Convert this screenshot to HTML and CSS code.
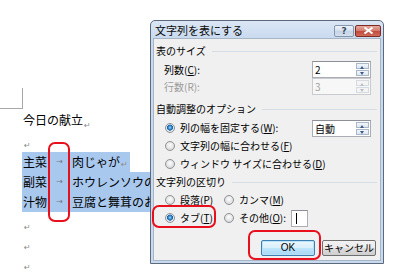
FILE: index.html
```html
<!DOCTYPE html>
<html lang="ja">
<head>
<meta charset="utf-8">
<link rel="stylesheet" href="styles.css">
</head>
<body>
<div class="page">
  <div class="doc">
    <div class="mark"></div>
    <div class="line first">今日の献立<span class="pil">↵</span></div>
    <div class="line blank"><span class="pil">↵</span></div>
    <div class="row"><span class="sel"><span class="cell">主菜</span><span class="tab">→</span>肉じゃが<span class="pil">↵</span></span></div>
    <div class="row"><span class="sel long"><span class="cell">副菜</span><span class="tab">→</span>ホウレンソウの</span></div>
    <div class="row"><span class="sel long"><span class="cell">汁物</span><span class="tab">→</span>豆腐と舞茸のお</span></div>
    <div class="line"><span class="pil">↵</span></div>
    <div class="line"><span class="pil">↵</span></div>
    <div class="line"><span class="pil">↵</span></div>
  </div>

  <div class="dialog">
    <div class="titlebar">
      <span class="title">文字列を表にする</span>
      <span class="caps">
        <span class="capbtn help">?</span>
        <span class="capbtn close">
          <svg width="11" height="7" viewBox="0 0 11 7"><path d="M1.5 0.5 L9.5 6.5 M9.5 0.5 L1.5 6.5" stroke="#fff" stroke-width="2" fill="none"/></svg>
        </span>
      </span>
    </div>
    <div class="dbody">
      <div class="group g1"><span>表のサイズ</span><span class="rule"></span></div>
      <div class="field"><span class="flabel">列数(<u>C</u>):</span>
        <span class="spin"><span class="val">2</span><span class="spinbtns"><span class="up"></span><span class="down"></span></span></span>
      </div>
      <div class="field disabled"><span class="flabel">行数(R):</span>
        <span class="spin dis"><span class="val">3</span><span class="spinbtns"><span class="up"></span><span class="down"></span></span></span>
      </div>
      <div class="group g2"><span>自動調整のオプション</span><span class="rule"></span></div>
      <div class="opt"><span class="radio on"></span><span class="otext">列の幅を固定する(<u>W</u>):</span>
        <span class="spin auto"><span class="val">自動</span><span class="spinbtns"><span class="up"></span><span class="down"></span></span></span>
      </div>
      <div class="opt"><span class="radio"></span><span class="otext">文字列の幅に合わせる(<u>F</u>)</span></div>
      <div class="opt"><span class="radio"></span><span class="otext">ウィンドウ サイズに合わせる(<u>D</u>)</span></div>
      <div class="group g3"><span>文字列の区切り</span><span class="rule"></span></div>
      <div class="seprow">
        <span class="sepcell"><span class="radio"></span><span class="otext">段落(P)</span></span>
        <span class="sepcell"><span class="radio"></span><span class="otext">カンマ(<u>M</u>)</span></span>
      </div>
      <div class="seprow">
        <span class="sepcell"><span class="radio on"></span><span class="otext">タブ(<u>T</u>)</span></span>
        <span class="sepcell"><span class="radio"></span><span class="otext">その他(<u>O</u>):</span><span class="tbox"><span class="caret"></span></span></span>
      </div>
      <div class="buttons">
        <span class="btn ok">OK</span>
        <span class="btn">キャンセル</span>
      </div>
    </div>
  </div>

  <div class="hl hl-tabs"></div>
  <div class="hl hl-tab"></div>
  <div class="hl hl-ok"></div>
</div>
</body>
</html>
```

FILE: styles.css
```css
html, body {
  margin: 0;
  padding: 0;
  background: #fff;
}
.page {
  position: relative;
  width: 400px;
  height: 273px;
  overflow: hidden;
  font-family: "Noto Sans CJK JP", "Noto Sans", sans-serif;
  color: #000;
}

/* document */
.doc {
  padding-top: 88px;
  font-size: 12px;
}
.mark {
  width: 23px;
  height: 21px;
  box-sizing: border-box;
  border-right: 1px solid #a8a8a8;
  border-bottom: 1px solid #a8a8a8;
}
.line {
  height: 20px;
  line-height: 20px;
  padding-left: 23px;
  white-space: nowrap;
}
.line.first { margin-top: 1px; }
.line.blank { height: 22px; }
.pil {
  font-family: "DejaVu Sans", sans-serif;
  font-size: 8px;
  color: #8a8a8a;
  position: relative;
  top: 3px;
  margin-left: 1px;
}
.row {
  height: 20px;
  padding-left: 22px;
  white-space: nowrap;
}
.sel {
  display: inline-flex;
  align-items: center;
  height: 20px;
  padding-left: 1px;
  padding-right: 2px;
  background: #a9c8ee;
  line-height: 20px;
}
.sel.long { padding-right: 20px; }
.cell { width: 24px; }
.tab {
  width: 25px;
  text-align: center;
  font-family: "DejaVu Sans", sans-serif;
  font-size: 8px;
  color: #6f7480;
}

/* dialog */
.dialog {
  position: absolute;
  left: 150px;
  top: 20px;
  width: 234px;
  height: 244px;
  box-sizing: border-box;
  border: 1px solid #5b6a7d;
  border-radius: 5px 5px 0 0;
  background: linear-gradient(#dae6f4, #c9daef 18px, #c9daef);
  display: flex;
  flex-direction: column;
  font-size: 10px;
  z-index: 2;
}
.titlebar {
  height: 16px;
  display: flex;
  align-items: center;
  justify-content: space-between;
  padding: 0 2px 0 4px;
}
.title {
  font-size: 11px;
  color: #0a0a0a;
  line-height: 16px;
  margin-top: 1px;
}
.caps {
  display: flex;
  gap: 1px;
  margin-top: 3px;
}
.capbtn {
  height: 12px;
  box-sizing: border-box;
  border-radius: 2px;
  display: flex;
  align-items: center;
  justify-content: center;
}
.help {
  width: 20px;
  border: 1px solid #8497ad;
  background: linear-gradient(#eef3fa, #d3dfee 50%, #c4d3e6 51%, #d4e0ee);
  font-family: "DejaVu Sans", sans-serif;
  font-size: 9px;
  font-weight: bold;
  color: #3c4a5c;
}
.close {
  width: 26px;
  border: 1px solid #7e2d25;
  background: linear-gradient(#e6a99f, #d2796c 50%, #c24a3c 51%, #cf6a58);
}
.dbody {
  flex: 1;
  margin: 1px 2px 2px 2px;
  border: 1px solid #a7b6c7;
  background: #f0f0f0;
  padding: 2px 3px 0 2px;
  display: flex;
  flex-direction: column;
}
.group {
  display: flex;
  align-items: center;
  white-space: nowrap;
  color: #000;
  line-height: 14px;
}
.group.g1 { height: 20px; }
.group.g2 { height: 20px; margin-top: 4px; }
.group.g3 { height: 18px; }
.rule {
  flex: 1;
  height: 0;
  border-top: 1px solid #d7dde5;
  margin-left: 6px;
  margin-top: 1px;
}
.field {
  height: 17px;
  display: flex;
  align-items: flex-start;
  justify-content: space-between;
  padding-left: 8px;
  padding-right: 6px;
}
.flabel {
  line-height: 17px;
}
.disabled .flabel { color: #9b9b9b; }
u { text-decoration-thickness: 1px; text-underline-offset: 1px; }
.spin {
  width: 59px;
  height: 17px;
  box-sizing: border-box;
  border: 1px solid #abadb3;
  border-top-color: #8c8f96;
  background: #fff;
  display: flex;
  justify-content: space-between;
}
.spin .val {
  padding-left: 2px;
  line-height: 15px;
  font-size: 10px;
}
.spin.dis { background: #f7f7f7; border-color: #c9cbd0; }
.spin.dis .val { color: #a0a0a0; }
.spinbtns {
  width: 13px;
  display: flex;
  flex-direction: column;
  padding: 1px 1px 1px 0;
  gap: 1px;
}
.spinbtns span {
  flex: 1;
  box-sizing: border-box;
  border: 1px solid #aab7c6;
  background: linear-gradient(#f2f6fb, #dde7f2);
  position: relative;
}
.spin.dis .spinbtns span { border-color: #d6dbe2; background: #f4f4f4; }
.spinbtns span::after {
  content: "";
  position: absolute;
  left: 3px;
  width: 0;
  height: 0;
  border-left: 2.5px solid transparent;
  border-right: 2.5px solid transparent;
}
.spinbtns .up::after { top: 2px; border-bottom: 3px solid #3d5a87; }
.spinbtns .down::after { top: 1px; border-top: 3px solid #3d5a87; }
.spin.dis .spinbtns .up::after { border-bottom-color: #b9bfc8; }
.spin.dis .spinbtns .down::after { border-top-color: #b9bfc8; }

.opt {
  height: 18px;
  display: flex;
  align-items: center;
  padding-left: 9px;
  padding-right: 6px;
  white-space: nowrap;
}
.opt .spin { margin-left: auto; }
.radio {
  width: 10px;
  height: 10px;
  box-sizing: border-box;
  border-radius: 50%;
  border: 1px solid #8e9297;
  background: radial-gradient(circle at 50% 40%, #ffffff 0, #e8e8e8 45%, #cfcfcf 100%);
  flex: none;
}
.radio.on {
  background: radial-gradient(circle at 50% 45%, #9bd8fb 0, #3a8fd3 1.6px, #1b5d9e 2.8px, #e9eef3 3.3px, #d6d9dd 100%);
}
.otext {
  margin-left: 5px;
  line-height: 16px;
}
.seprow {
  height: 18px;
  display: flex;
  align-items: center;
  padding-left: 9px;
  white-space: nowrap;
}
.sepcell {
  display: flex;
  align-items: center;
}
.sepcell:first-child { width: 59px; }
.tbox {
  width: 17px;
  height: 17px;
  box-sizing: border-box;
  border: 1px solid #abadb3;
  border-top-color: #8c8f96;
  background: #fff;
  margin-left: 5px;
  display: flex;
  align-items: center;
}
.caret {
  width: 1px;
  height: 11px;
  background: #000;
  margin-left: 4px;
}
.buttons {
  margin-top: 13px;
  display: flex;
  justify-content: flex-end;
  gap: 7px;
  padding-right: 1px;
}
.btn {
  width: 54px;
  height: 16px;
  box-sizing: border-box;
  border: 1px solid #707070;
  border-radius: 2px;
  background: linear-gradient(#f2f2f2, #ebebeb 50%, #dddddd 51%, #cfcfcf);
  display: flex;
  align-items: center;
  justify-content: center;
  font-size: 10px;
  line-height: 14px;
}
.btn.ok {
  border-color: #3c7fb1;
  background: linear-gradient(#eaf6fd, #d9f0fc 50%, #bee6fd 51%, #a7d9f5);
  box-shadow: inset 0 0 0 1px #b9e2f9;
  font-family: "Liberation Sans", sans-serif;
}

/* red annotations */
.hl {
  position: absolute;
  border: 2px solid #e8101c;
  border-radius: 7px;
  z-index: 3;
  box-sizing: border-box;
}
.hl-tabs { left: 48px; top: 142px; width: 22px; height: 80px; }
.hl-tab { left: 152px; top: 205px; width: 64px; height: 23px; }
.hl-ok { left: 248px; top: 230px; width: 73px; height: 30px; }
```
